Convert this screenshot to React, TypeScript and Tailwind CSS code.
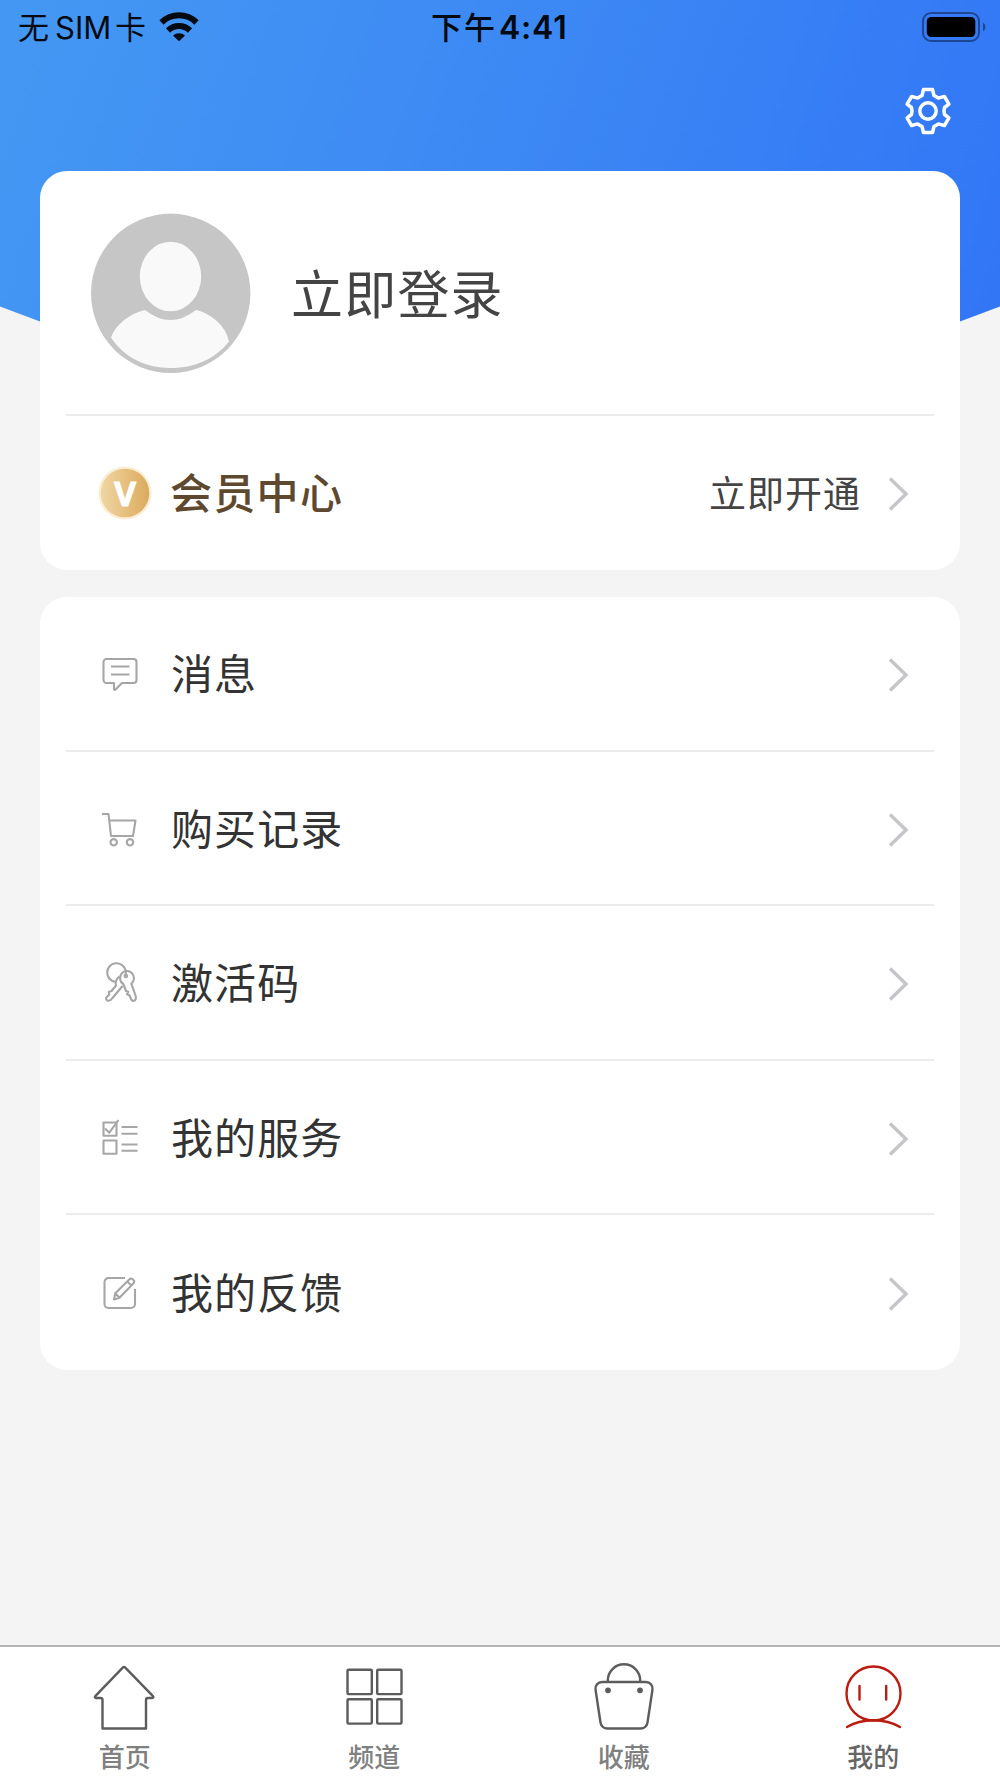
import type { ReactNode } from 'react'

const MessageIcon = () => (
  <>
    <path d="M4.5 5H31.5a3 3 0 0 1 3 3V26a3 3 0 0 1-3 3H20L13.5 35.5c-.8.8-1.5.4-1.5-.6V29H4.5a3 3 0 0 1-3-3V8a3 3 0 0 1 3-3Z" />
    <path d="M9 12.5H27.5M9 20.5H27.5" />
  </>
)

const CartIcon = () => (
  <>
    <path d="M0 5H6.5L9 27H31L33.5 11.5H7.3" />
    <circle cx="11.7" cy="33.3" r="3.2" />
    <circle cx="28" cy="33.3" r="3.2" />
  </>
)

const KeysIcon = () => (
  <>
    <path d="M13 18.7a9.3 9.3 0 1 1 10.5-11.5" />
    <circle cx="23.8" cy="13" r="1.3" />
    <path d="M23.8 7V12.5" />
    <path d="M21.3 21a7 7 0 1 1 8-.4L33.7 33C34.3 35 33.5 37.5 32 37.8 30 38.3 29.3 37 28.5 35L27.5 32.5 25 31 26.3 29 24 28Z" />
    <path d="M17.3 13.5c-3 2.5-4.3 5.5-3.3 9L9.5 28 6.8 29 7.3 31.5 4.3 34.5C3.5 36.5 5 38 6.5 37.8 8.500 37.8 9.5 36.5 10.500 35L20.5 23" />
  </>
)

const ServiceIcon = () => (
  <>
    <path d="M1.5 4.500H14.5V17.7H1.5ZM1.5 22.5H14.5V35.8H1.5Z" />
    <path d="M3 10.5 7.3 14.7 16.5 2" />
    <path d="M19.5 9H35.5M19.5 15.8H35.5M19.5 26.5H35.5M19.5 32.8H35.5" />
  </>
)

const FeedbackIcon = () => (
  <>
    <path d="M23 5H6.5a4 4 0 0 0-4 4V31a4 4 0 0 0 4 4H29a4 4 0 0 0 4-4V16" />
    <path d="M12 26.5 13.3 20.3 27.5 6.2a2.2 2.2 0 0 1 3.2 0l.8.8a2.2 2.2 0 0 1 0 3.2L17.5 24.8ZM13.3 20.3 17.5 24.8M25.3 8.5 29.3 12.5" />
  </>
)

const menu: { label: string; icon: ReactNode }[] = [
  { label: '消息', icon: <MessageIcon /> },
  { label: '购买记录', icon: <CartIcon /> },
  { label: '激活码', icon: <KeysIcon /> },
  { label: '我的服务', icon: <ServiceIcon /> },
  { label: '我的反馈', icon: <FeedbackIcon /> }
]

const tabs: { label: string; active?: boolean; icon: ReactNode }[] = [
  {
    label: '首页',
    icon: (
      <path d="M30 6.3a1.4 1.4 0 0 1 2 0L60 35.2c.8.9.5 1.8-.7 1.8H55a2 2 0 0 0-2 2V67.5H9.5V39a2 2 0 0 0-2-2H3c-1.2 0-1.5-.9-.7-1.8Z" />
    )
  },
  {
    label: '频道',
    icon: (
      <>
        <rect x="5.5" y="8.8" width="24.3" height="24.3" rx="1" />
        <rect x="35.2" y="8.8" width="24.3" height="24.3" rx="1" />
        <rect x="5.5" y="38.3" width="24.3" height="24.3" rx="1" />
        <rect x="35.2" y="38.3" width="24.3" height="24.3" rx="1" />
      </>
    )
  },
  {
    label: '收藏',
    icon: (
      <>
        <path d="M10 21H54a6.5 6.5 0 0 1 6.5 7.5L55.5 61.5a7 7 0 0 1-7 6H15.5a7 7 0 0 1-7-6L3.5 28.5A6.5 6.5 0 0 1 10 21Z" />
        <path d="M15.8 21V19.5a16.2 16.2 0 0 1 32.4 0V21" />
        <circle cx="16" cy="29.3" r="1.7" fill="currentColor" />
        <circle cx="48" cy="29.3" r="1.7" fill="currentColor" />
      </>
    )
  },
  {
    label: '我的',
    active: true,
    icon: (
      <>
        <circle cx="32.5" cy="32.5" r="27" />
        <path d="M18.5 25V38.5M45.2 25V38.5M6 66C21 57 44 57 59 66" strokeLinecap="round" />
      </>
    )
  }
]

const Chevron = () => (
  <svg width="22" height="36" viewBox="0 0 22 36" fill="none" stroke="#c6c6ca" strokeWidth="3.5">
    <path d="M2 2.5 18 18 2 33.5" />
  </svg>
)

const StatusBar = () => (
  <div className="flex h-[54px] items-center text-[31px] leading-none text-[#050a12]">
    <div className="flex w-[431px] items-center pl-[18px]">
      <span className="pb-[3px]">无</span>
      <span className="ml-[6px] w-[60px] font-['Inter'] text-[31px]">SIM</span>
      <span className="pb-[3px]">卡</span>
      <svg className="ml-[13px]" width="40" height="30" viewBox="0 0 40 30">
        <g fill="none" stroke="currentColor" strokeWidth="6">
          <path d="M2.5 10.5a25 25 0 0 1 35 0" />
          <path d="M9 18.5a16 16 0 0 1 22 0" />
        </g>
        <path d="M14 23.5a9 9 0 0 1 12 0L20 29.3Z" fill="currentColor" />
      </svg>
    </div>
    <span className="pb-[4px] font-medium tracking-[2px]">下午</span>
    <span className="ml-[2px] pt-[1px] font-['Inter'] text-[32px] font-semibold tracking-[0.8px]">4:41</span>
    <svg className="mr-[14px] ml-auto" width="64" height="30" viewBox="0 0 64 30">
      <rect x="1" y="1" width="56" height="28" rx="8" fill="none" stroke="#1d4796" strokeWidth="2" />
      <rect x="4.8" y="5" width="48.5" height="20" rx="4.5" fill="#000" />
      <path d="M61 10.5c3.2 2 3.2 7 0 9Z" fill="#1d4796" />
    </svg>
  </div>
)

const HeaderBackground = () => (
  <svg className="absolute top-0 left-0" width="1000" height="400" viewBox="0 0 1000 400">
    <defs>
      <linearGradient id="header" gradientUnits="userSpaceOnUse" x1="0" y1="60" x2="960" y2="400">
        <stop offset="0" stopColor="#4498f3" />
        <stop offset="0.5" stopColor="#3c88f4" />
        <stop offset="1" stopColor="#3276f6" />
      </linearGradient>
    </defs>
    <path d="M0 0H1000V306.5L960 321.5Q500 470 40 321.5L0 306.5Z" fill="url(#header)" />
  </svg>
)

const Avatar = () => (
  <svg width="160" height="160" viewBox="0 0 160 160">
    <circle cx="79.7" cy="80.3" r="79.7" fill="#c6c6c6" />
    <g fill="#f9f9f9">
      <ellipse cx="79.5" cy="63.5" rx="30.7" ry="34.8" />
      <path d="M54 97Q79.5 117 105 97C121 101 135 113 138 128.5C125 145 105 155 79.5 155S33 144 20 124.5C25 111 38 101 54 97Z" />
    </g>
  </svg>
)

const App = () => {
  return (
    <div className="relative flex h-[1778px] w-[1000px] flex-col overflow-hidden bg-[#f4f4f4] font-['Noto_Sans_CJK_SC',sans-serif]">
      <HeaderBackground />

      <div className="relative flex flex-1 flex-col">
        <StatusBar />
        <div className="flex h-[117px] justify-end pt-[32px] pr-[48px]">
          <svg width="48" height="50" viewBox="-24 -25 48 50" fill="none" stroke="#fff" strokeWidth="3.5" strokeLinejoin="round">
            <path d="M-6-15.5-4.5-21.5H4.5L6-15.5 10.4-12.9 16.4-14.6 20.9-6.9 16.5-3.5Q15.5 0 16.5 3.5L20.9 6.9 16.4 14.6 10.4 12.9 6 15.5 4.5 21.5H-4.5L-6 15.5-10.4 12.9-16.4 14.6-20.9 6.9-16.5 3.5Q-15.5 0-16.5-3.5L-20.9-6.9-16.4-14.6-10.4-12.9Z" />
            <circle r="8.2" />
          </svg>
        </div>

        <div className="mx-10 h-[399px] rounded-[27px] bg-white px-[26px]">
          <div className="flex h-[245px] items-center border-b-2 border-[#ececec] pl-[25px]">
            <Avatar />
            <span className="ml-[40px] pb-[2px] text-[52px] leading-none tracking-[1.2px] text-[#444]">立即登录</span>
          </div>
          <div className="flex h-[155px] items-center pr-[24px] pl-[31px]">
            <svg className="mb-[2px]" width="56" height="56" viewBox="0 0 56 56">
              <defs>
                <linearGradient id="gold">
                  <stop offset="0" stopColor="#f0d6a2" />
                  <stop offset="1" stopColor="#dcaa5e" />
                </linearGradient>
              </defs>
              <circle cx="28" cy="28" r="26.5" fill="#fbedd2" />
              <circle cx="28" cy="28" r="24.3" fill="url(#gold)" />
              <text
                x="28"
                y="40.5"
                textAnchor="middle"
                fill="#fff"
                stroke="#fff"
                strokeWidth="0.8"
                fontFamily="Open Sans"
                fontSize="34"
                fontWeight="700">
                V
              </text>
            </svg>
            <span className="ml-[17px] pb-[6px] text-[42px] leading-none font-medium tracking-[1.3px] text-[#5e482e]">会员中心</span>
            <span className="mr-[27px] ml-auto pb-[2px] text-[37px] leading-none tracking-[1px] text-[#444]">立即开通</span>
            <Chevron />
          </div>
        </div>

        <div className="mx-10 mt-[27px] rounded-[27px] bg-white px-[26px]">
          {menu.map(({ label, icon }) => (
            <div
              key={label}
              className="flex h-[154.6px] items-center border-b-2 border-[#ececec] pt-[4px] pr-[24px] pl-[36px] last:border-b-0 last:pt-[2px]">
              <svg className="mb-[2px] overflow-visible" width="36" height="40" viewBox="0 0 36 40" fill="none" stroke="#a6a6a6" strokeWidth="2.1" strokeLinejoin="round">
                {icon}
              </svg>
              <span className="ml-[33px] pb-[6px] text-[42px] leading-none tracking-[1.1px] text-[#333]">{label}</span>
              <span className="ml-auto">
                <Chevron />
              </span>
            </div>
          ))}
        </div>
      </div>

      <div className="relative flex h-[133px] border-t-2 border-[#b3b3b3] bg-white pr-[2px]">
        {tabs.map(({ label, icon, active }) => (
          <div key={label} className="flex flex-1 flex-col items-center pt-[14px]">
            <svg
              className={active ? 'text-[#bb1c10]' : 'text-[#5c5c5c]'}
              width="64"
              height="72"
              viewBox="0 0 64 72"
              fill="none"
              stroke="currentColor"
              strokeWidth="2.4"
              strokeLinejoin="round">
              {icon}
            </svg>
            <span
              className={
                active
                  ? 'mt-[10px] text-[26px] leading-none font-medium text-[#666]'
                  : 'mt-[10px] text-[26px] leading-none font-medium text-[#808080]'
              }>
              {label}
            </span>
          </div>
        ))}
      </div>
    </div>
  )
}

export default App
